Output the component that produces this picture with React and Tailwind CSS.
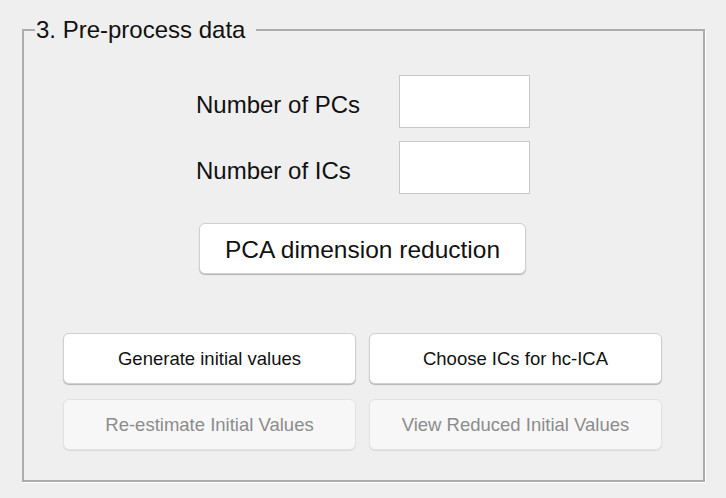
export default function App() {
  const font = { fontFamily: '"Liberation Sans", Arial, sans-serif' };
  return (
    <div className="w-[726px] h-[498px] bg-[#efefef] overflow-hidden" style={font}>
      <fieldset className="ml-[22px] mt-[18px] w-[683px] h-[464px] border-2 border-[#acacac] p-0 m-0 shadow-[1px_1px_0_#ffffff]">
        <legend className="ml-[11px] pl-[1px] pr-[11px] text-[24px] leading-[24px] text-[#111]">
          3. Pre-process data
        </legend>

        <div className="ml-[172px] mt-[33px] flex flex-col gap-[13px]">
          <div className="flex items-center">
            <span className="w-[203px] pt-[7px] text-[24px] text-[#111]">Number of PCs</span>
            <div className="w-[131px] h-[53px] bg-white border border-[#c8c8c8]"></div>
          </div>
          <div className="flex items-center">
            <span className="w-[203px] pt-[7px] text-[24px] text-[#111]">Number of ICs</span>
            <div className="w-[131px] h-[53px] bg-white border border-[#c8c8c8]"></div>
          </div>
        </div>

        <button className="ml-[175px] mt-[29px] w-[327px] h-[51px] pt-[3px] bg-white rounded-[6px] border border-[#d0d0d0] shadow-[0_1px_1px_rgba(0,0,0,0.25)] text-[24.5px] text-[#111]">
          PCA dimension reduction
        </button>

        <div className="ml-[39px] mt-[59px] grid grid-cols-[293px_293px] gap-x-[13px] gap-y-[15px]">
          <button className="h-[51px] bg-white rounded-[6px] border border-[#d0d0d0] shadow-[0_1px_1px_rgba(0,0,0,0.25)] text-[18.5px] text-[#111]">
            Generate initial values
          </button>
          <button className="h-[51px] bg-white rounded-[6px] border border-[#d0d0d0] shadow-[0_1px_1px_rgba(0,0,0,0.25)] text-[18.5px] text-[#111]">
            Choose ICs for hc-ICA
          </button>
          <button disabled className="h-[51px] bg-[#f7f7f7] rounded-[6px] border border-[#e2e2e2] shadow-[0_1px_1px_rgba(0,0,0,0.08)] text-[18.5px] text-[#8c8c8c]">
            Re-estimate Initial Values
          </button>
          <button disabled className="h-[51px] bg-[#f7f7f7] rounded-[6px] border border-[#e2e2e2] shadow-[0_1px_1px_rgba(0,0,0,0.08)] text-[18.5px] text-[#8c8c8c]">
            View Reduced Initial Values
          </button>
        </div>
      </fieldset>
    </div>
  );
}
